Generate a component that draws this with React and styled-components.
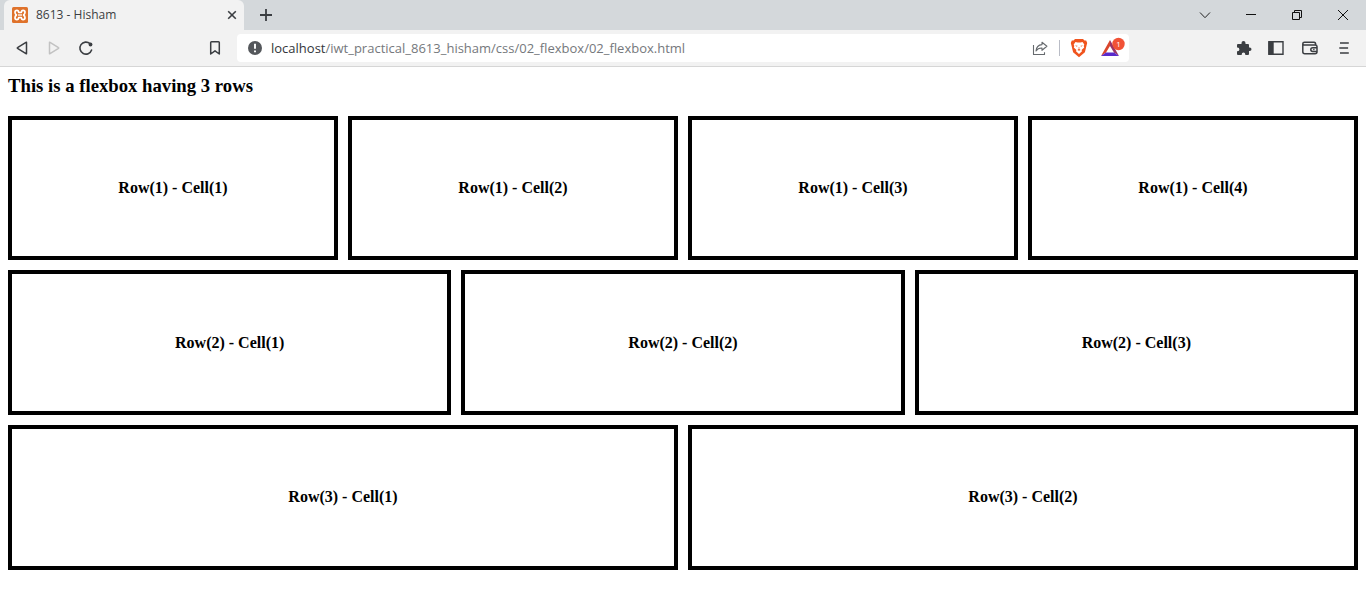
import React from 'react';
import styled, { createGlobalStyle } from 'styled-components';

const GlobalStyle = createGlobalStyle`
  * { box-sizing: border-box; }
  body { margin: 0; background: #fff; }
  button { border: 0; padding: 0; background: none; color: inherit; font: inherit; }
  svg { display: block; }
`;

const uiFont = '"Open Sans", "Noto Sans", sans-serif';

const Browser = styled.div`
  min-height: 100vh;
  display: flex;
  flex-direction: column;
`;

const TabStrip = styled.header`
  display: flex;
  align-items: stretch;
  height: 30px;
  padding-left: 4px;
  background: #d4d8db;
  color: #1e2226;
  font-family: ${uiFont};
`;

const Tab = styled.div`
  display: flex;
  align-items: center;
  gap: 8px;
  width: 240px;
  padding: 0 4px 0 8px;
  background: #f2f2f2;
  border-radius: 6px 6px 0 0;
`;

const TabTitle = styled.span`
  flex: 1;
  font-size: 12px;
  line-height: 16px;
  color: #3b3e42;
`;

const IconButton = styled.button`
  display: flex;
  align-items: center;
  justify-content: center;
  flex: none;
  width: ${({ $width }) => $width || 32}px;
  height: 28px;
  color: ${({ $color }) => $color || '#3b3e42'};
`;

const NewTab = styled(IconButton)`
  margin-left: 6px;
  align-self: center;
`;

const WindowControls = styled.div`
  display: flex;
  align-items: center;
  margin-left: auto;
`;

const Toolbar = styled.nav`
  display: flex;
  align-items: center;
  height: 37px;
  padding: 0 6px;
  background: #f2f2f2;
  border-bottom: 1px solid #d6d6d6;
  font-family: ${uiFont};
`;

const NavGroup = styled.div`
  display: flex;
  flex: none;
  width: 193px;
`;

const AddressBar = styled.div`
  display: flex;
  align-items: center;
  flex: 1;
  min-width: 0;
  height: 28px;
  margin-left: 6px;
  padding-left: 10px;
  background: #fff;
  border-radius: 4px;
  font-size: 13px;
  line-height: 20px;
  color: #33363a;
`;

const Host = styled.label`
  margin-left: 8px;
`;

const Path = styled.input`
  flex: 1;
  min-width: 0;
  height: 20px;
  padding: 0;
  border: 0;
  outline: 0;
  background: none;
  font: inherit;
  color: #75787c;
`;

const Divider = styled.span`
  width: 1px;
  height: 16px;
  margin: 0 3px;
  background: #b9bcc6;
`;

const ToolGroup = styled.div`
  display: flex;
  flex: none;
  margin-left: 99px;
`;

const Page = styled.main`
  flex: 1;
  padding: 8px 8px 32px;
  color: #000;
  font-family: "Liberation Serif", "Times New Roman", serif;
`;

const Heading = styled.h3`
  margin: 0 0 1em;
  line-height: 22px;
`;

const Rows = styled.div`
  display: flex;
  flex-direction: column;
  gap: 10px;
  height: calc(100vh - 148px);
`;

const Row = styled.section`
  display: flex;
  flex: 1;
  gap: 10px;
`;

const Cell = styled.div`
  display: flex;
  flex: 1;
  align-items: center;
  justify-content: center;
  border: 4px solid #000;
  font-size: 16px;
  line-height: 18px;
  font-weight: bold;
`;

const Line = ({ size = 16, width = 1, children, ...rest }) => (
  <svg width={size} height={size} viewBox={`0 0 ${size} ${size}`} fill="none" stroke="currentColor"
    strokeWidth={width} aria-hidden="true" {...rest}>
    {children}
  </svg>
);

const Favicon = () => (
  <svg width="16" height="16" viewBox="0 0 16 16" aria-hidden="true">
    <rect width="16" height="16" rx="1.5" fill="#df722b" />
    <path d="M4.900 3.300Q3 3.300 3 5.200 3 6.800 4.400 8 3 9.200 3 10.800 3 12.700 4.900 12.700 6.600 12.700 6.700 10.500H9.300Q9.400 12.700 11.100 12.700 13 12.700 13 10.800 13 9.200 11.600 8 13 6.800 13 5.200 13 3.300 11.100 3.300 9.400 3.300 9.300 5.500H6.700Q6.600 3.300 4.900 3.300Z"
      fill="none" stroke="#fff" strokeWidth="1.7" strokeLinejoin="round" />
    <path d="M6 8h4" stroke="#fff" strokeWidth="1.3" />
  </svg>
);

const Info = () => (
  <svg width="16" height="16" viewBox="0 0 16 16" aria-hidden="true">
    <circle cx="8" cy="8" r="7" fill="#54575b" />
    <path d="M8 3.8v5M8 10.4v1.9" stroke="#fff" strokeWidth="1.9" />
  </svg>
);

const Lion = () => (
  <svg width="18" height="20" viewBox="0 0 18 20" aria-hidden="true">
    <path d="M5 1h8l1.5 1.5 1.7-.1 1 2.7-.6 2.2-1.7 7L9 19.2l-5.9-4.9-1.7-7-.6-2.2 1-2.7 1.7.1Z" fill="#f0541e" />
    <path d="m5.500 4 2 .4h3l2-.4 1.800 2.500-.6 1.500.5 1.400-2.600 2.600.4 1.300L9 16l-3-2.700.4-1.300-2.600-2.600.5-1.400-.6-1.500Z" fill="#fff" />
    <path d="m5 7.400 2.500.3-.5 1Zm8 0-2.500.3.5 1ZM8.700 9h.6v2l1.300.9L9 12.800l-1.600-.9 1.300-.9Z" fill="#f0541e" />
  </svg>
);

const Rewards = () => (
  <svg width="26" height="22" viewBox="0 0 26 22" aria-hidden="true">
    <path d="M11 3 2 19l5-3.500 4-6.500Z" fill="#d9452c" />
    <path d="m11 3 9 16-5-3.500-4-6.500Z" fill="#9b3567" />
    <path d="M2 19h18l-5-3.500H7Z" fill="#592acb" />
    <circle cx="19.500" cy="7" r="6.2" fill="#f15236" />
    <text x="19.500" y="10" textAnchor="middle" fontFamily="Open Sans" fontSize="8" fill="#fff">1</text>
  </svg>
);

const Puzzle = () => (
  <svg width="16" height="16" viewBox="0 0 16 16" fill="currentColor" aria-hidden="true">
    <path d="M2 4h3.5V3a2 2 0 0 1 4 0v1H12q1 0 1 1v2.5h.7a1.8 1.8 0 0 1 0 3.6H13V14q0 1-1 1H9.3v-.6a1.8 1.8 0 0 0-3.6 0v.6H2q-1 0-1-1v-2.8h.6a1.8 1.8 0 0 0 0-3.6H1V5q0-1 1-1Z" />
  </svg>
);

const rows = [4, 3, 2];

export default function App() {
  return (
    <Browser>
      <GlobalStyle />
      <TabStrip>
        <Tab>
          <Favicon />
          <TabTitle>8613 - Hisham</TabTitle>
          <IconButton $width={16} aria-label="Close tab">
            <Line width={1.6}><path d="m4.2 4.2 7.6 7.6m0-7.6-7.6 7.6" /></Line>
          </IconButton>
        </Tab>
        <NewTab aria-label="New tab">
          <Line width={1.8}><path d="M8 2v12M2 8h12" /></Line>
        </NewTab>
        <WindowControls>
          <IconButton $width={46} $color="#222" aria-label="Search tabs">
            <Line><path d="m3 5.500 5 5.200 5-5.200" /></Line>
          </IconButton>
          <IconButton $width={46} $color="#111" aria-label="Minimize">
            <Line><path d="M3 7.500h10" /></Line>
          </IconButton>
          <IconButton $width={46} $color="#111" aria-label="Restore">
            <Line><path d="M3.500 5.500h7v7h-7zM5.500 5.500v-2h7v7h-2" /></Line>
          </IconButton>
          <IconButton $width={46} $color="#111" aria-label="Close window">
            <Line><path d="m3 3 10 10m0-10L3 13" /></Line>
          </IconButton>
        </WindowControls>
      </TabStrip>

      <Toolbar>
        <NavGroup>
          <IconButton aria-label="Back">
            <Line width={1.5} strokeLinejoin="round"><path d="M12.500 2.500v11q0 .5-.5.200L3.500 8.300q-.4-.3 0-.6L12 2.300q.5-.3.5.2Z" /></Line>
          </IconButton>
          <IconButton $color="#c2c2c2" aria-label="Forward">
            <Line width={1.5} strokeLinejoin="round"><path d="M3.500 2.500v11q0 .5.5.200l8.500-5.400q.4-.3 0-.6L4 2.300q-.5-.3-.5.2Z" /></Line>
          </IconButton>
          <IconButton aria-label="Reload">
            <Line width={1.6}>
              <path d="M13.600 10A6 6 0 1 1 12 3.700" strokeLinecap="round" />
              <circle cx="12.500" cy="4.500" r="1.900" fill="currentColor" stroke="none" />
            </Line>
          </IconButton>
        </NavGroup>
        <IconButton aria-label="Bookmark this page">
          <Line width={1.5} strokeLinejoin="round"><path d="M3.700 2.500q0-.8.8-.8h7q.8 0 .8.8V14L8 10.800 3.700 14Z" /></Line>
        </IconButton>
        <AddressBar>
          <Info />
          <Host htmlFor="path">localhost</Host>
          <Path id="path" type="text" defaultValue="/iwt_practical_8613_hisham/css/02_flexbox/02_flexbox.html" spellCheck={false} />
          <IconButton $color="#666a6e" aria-label="Share">
            <Line width={1.1}>
              <path d="M1.500 5v9.500h11v-2.300M10 2.300 14.900 6.300 10 10.300V8Q6 7.800 4 11 4.500 5 10 4.600Z" strokeLinejoin="round" />
            </Line>
          </IconButton>
          <Divider />
          <IconButton aria-label="Shields"><Lion /></IconButton>
          <IconButton $width={34} aria-label="Rewards"><Rewards /></IconButton>
        </AddressBar>
        <ToolGroup>
          <IconButton aria-label="Extensions"><Puzzle /></IconButton>
          <IconButton aria-label="Sidebar">
            <Line width={1.4}><path d="M1 1.700h14v12.600H1Z" /><path d="M1 2h4v12H1z" fill="currentColor" /></Line>
          </IconButton>
          <IconButton $width={36} aria-label="Wallet">
            <Line width={1.500} strokeLinejoin="round">
              <path d="M.8 3.800v8q0 2 2 2H13q2 0 2-2V6.500q0-1.600-1.800-1.600H2Q.8 4.900.8 3.700.8 2.300 2.500 2.300H12q1.700 0 1.700 2.500M15 7.700h-4.300a1.900 1.900 0 0 0 0 3.800H15" />
              <path d="M11.200 9.600h1.300" />
            </Line>
          </IconButton>
          <IconButton aria-label="Menu">
            <Line width={1.600}><path d="M4 3h8.800M3.300 8h8.800M4 13h8.800" /></Line>
          </IconButton>
        </ToolGroup>
      </Toolbar>

      <Page>
        <Heading>This is a flexbox having 3 rows</Heading>
        <Rows>
          {rows.map((count, r) => (
            <Row key={r}>
              {Array.from({ length: count }, (_, c) => (
                <Cell key={c}>{`Row(${r + 1}) - Cell(${c + 1})`}</Cell>
              ))}
            </Row>
          ))}
        </Rows>
      </Page>
    </Browser>
  );
}
